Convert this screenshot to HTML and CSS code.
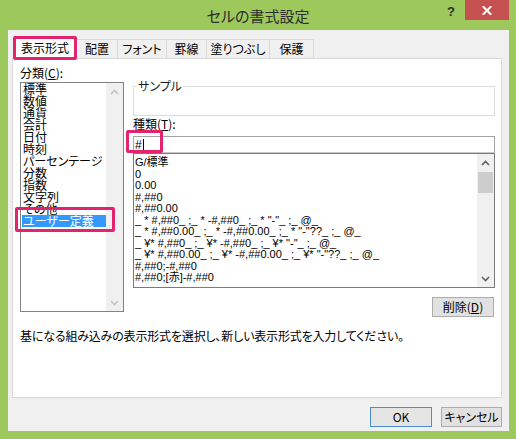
FILE: index.html
```html
<!DOCTYPE html>
<html lang="ja">
<head>
<meta charset="utf-8">
<title>セルの書式設定</title>
<link rel="stylesheet" href="styles.css">
</head>
<body>
<div class="window">
  <div class="titlebar">
    <div></div>
    <div class="title">セルの書式設定</div>
    <div class="controls">
      <span class="help">?</span>
      <span class="close"><svg width="10" height="9" viewBox="0 0 10 9"><path d="M1.5 1 L8.5 8 M8.5 1 L1.5 8" stroke="#fff" stroke-width="2" stroke-linecap="square"/></svg></span>
    </div>
  </div>
  <div class="client">
    <div class="tabs">
      <div class="tab selected t1">表示形式</div>
      <div class="tab t2">配置</div>
      <div class="tab t3">フォント</div>
      <div class="tab t4">罫線</div>
      <div class="tab t5">塗りつぶし</div>
      <div class="tab t6">保護</div>
    </div>
    <div class="panel">
      <div class="leftcol">
        <div class="label">分類(<u>C</u>):</div>
        <div class="catlist">
          <div class="items">
            <div class="item">標準</div>
            <div class="item">数値</div>
            <div class="item">通貨</div>
            <div class="item">会計</div>
            <div class="item">日付</div>
            <div class="item">時刻</div>
            <div class="item">パーセンテージ</div>
            <div class="item">分数</div>
            <div class="item">指数</div>
            <div class="item">文字列</div>
            <div class="item">その他</div>
            <div class="item sel">ユーザー定義</div>
          </div>
          <div class="vscroll disabled">
            <div class="arrow"><svg width="9" height="6" viewBox="0 0 9 6"><polyline points="1,5 4.5,1.5 8,5" fill="none" stroke="#c4c4c4" stroke-width="1.6"/></svg></div>
            <div class="track"></div>
            <div class="arrow"><svg width="9" height="6" viewBox="0 0 9 6"><polyline points="1,1 4.5,4.5 8,1" fill="none" stroke="#c4c4c4" stroke-width="1.6"/></svg></div>
          </div>
        </div>
      </div>
      <div class="rightcol">
        <fieldset class="sample">
          <legend>サンプル</legend>
          <div class="sample-body"></div>
        </fieldset>
        <div class="label2">種類(<u>T</u>):</div>
        <div class="input"><span>#</span><span class="caret"></span></div>
        <div class="fmtlist">
          <div class="fitems">
            <div class="fitem">G/標準</div>
            <div class="fitem">0</div>
            <div class="fitem">0.00</div>
            <div class="fitem">#,##0</div>
            <div class="fitem">#,##0.00</div>
            <div class="fitem">_ * #,##0_ ;_ * -#,##0_ ;_ * "-"_ ;_ @_</div>
            <div class="fitem">_ * #,##0.00_ ;_ * -#,##0.00_ ;_ * "-"??_ ;_ @_</div>
            <div class="fitem">_ ¥* #,##0_ ;_ ¥* -#,##0_ ;_ ¥* "-"_ ;_ @_</div>
            <div class="fitem">_ ¥* #,##0.00_ ;_ ¥* -#,##0.00_ ;_ ¥* "-"??_ ;_ @_</div>
            <div class="fitem">#,##0;-#,##0</div>
            <div class="fitem">#,##0;[赤]-#,##0</div>
          </div>
          <div class="vscroll">
            <div class="arrow"><svg width="9" height="6" viewBox="0 0 9 6"><polyline points="1,5 4.5,1.5 8,5" fill="none" stroke="#606060" stroke-width="1.6"/></svg></div>
            <div class="thumb"></div>
            <div class="track"></div>
            <div class="arrow"><svg width="9" height="6" viewBox="0 0 9 6"><polyline points="1,1 4.5,4.5 8,1" fill="none" stroke="#606060" stroke-width="1.6"/></svg></div>
          </div>
        </div>
        <div class="delrow"><button class="btn del">削除(<u>D</u>)</button></div>
      </div>
      <div class="desc">基になる組み込みの表示形式を選択し、新しい表示形式を入力してください。</div>
    </div>
    <div class="buttons">
      <button class="btn ok">OK</button>
      <button class="btn cancel">キャンセル</button>
    </div>
  </div>
  <div class="mark mark-tab"></div>
  <div class="mark mark-input"></div>
  <div class="mark mark-list"></div>
</div>
</body>
</html>
```

FILE: styles.css
```css
* { box-sizing: border-box; }
html, body { margin: 0; padding: 0; }
body {
  background: #9dc85c;
  font-family: "Noto Sans CJK JP", "Liberation Sans", sans-serif;
  font-feature-settings: "palt";
  font-size: 12px;
  color: #000;
}
.window {
  position: relative;
  width: 516px;
  height: 439px;
  background: #9dc85c;
  display: flex;
  flex-direction: column;
}
.titlebar {
  height: 30px;
  display: grid;
  grid-template-columns: 1fr auto 1fr;
}
.title {
  font-size: 15px;
  line-height: 30px;
  color: #2e2e2e;
  padding-top: 1px;
}
.controls {
  display: flex;
  justify-content: flex-end;
  align-items: flex-start;
  padding-right: 7px;
}
.help {
  width: 14px;
  margin-top: 4px;
  margin-right: 7px;
  font-family: "Liberation Sans", sans-serif;
  font-weight: bold;
  font-size: 13px;
  line-height: 16px;
  text-align: center;
  color: #303030;
}
.close {
  width: 44px;
  height: 20px;
  background: #c75050;
  display: flex;
  align-items: center;
  justify-content: center;
}
.client {
  flex: 1;
  margin: 0 7px 8px 8px;
  background: #f0f0f0;
  padding: 7px 7px 4px 4px;
  display: flex;
  flex-direction: column;
}
.tabs {
  height: 21px;
  display: flex;
  align-items: flex-end;
  padding-left: 1px;
}
.tab {
  height: 19px;
  border: 1px solid #d9d9d9;
  border-bottom: none;
  background: #f0f0f0;
  margin-left: -1px;
  text-align: center;
  line-height: 18px;
  white-space: nowrap;
}
.tab.selected {
  height: 22px;
  margin-bottom: -1px;
  background: #fff;
  position: relative;
  z-index: 1;
  line-height: 20px;
  margin-left: 0;
}
.t1 { width: 64px; }
.t2 { width: 42px; margin-left: -1px; }
.t3 { width: 50px; }
.t4 { width: 41px; }
.t5 { width: 64px; }
.t6 { width: 45px; }
.panel {
  height: 340px;
  background: #fff;
  border: 1px solid #d9d9d9;
  display: grid;
  grid-template-columns: 104px 362px;
  grid-template-rows: 252px auto;
  column-gap: 9px;
  padding: 6px 0 0 7px;
}
.leftcol { display: flex; flex-direction: column; }
.label { line-height: 16px; height: 16px; margin-bottom: 1px; }
.catlist {
  height: 230px;
  border: 1px solid #838383;
  display: flex;
}
.items { flex: 1; padding-left: 1px; }
.item {
  height: 12px;
  line-height: 12px;
  padding-left: 1px;
  white-space: nowrap;
  overflow: visible;
}
.item.sel { background: #3399ff; color: #fff; }
.vscroll {
  width: 17px;
  background: #f0f0f0;
  display: flex;
  flex-direction: column;
}
.vscroll .arrow {
  height: 17px;
  display: flex;
  align-items: center;
  justify-content: center;
}
.vscroll .track { flex: 1; }
.vscroll .thumb {
  height: 21px;
  margin: 1px 1px 0 1px;
  background: #cdcdcd;
}
.rightcol { display: flex; flex-direction: column; }
.sample {
  margin: 14px 0 0 0;
  padding: 0;
  border: 1px solid #dcdcdc;
  min-width: 0;
}
.sample legend {
  padding: 0 1px;
  margin-left: 3px;
  line-height: 14px;
  color: #1a1a1a;
}
.sample-body { height: 22px; }
.label2 { line-height: 14px; height: 14px; margin-top: 1px; }
.input {
  margin-top: 5px;
  height: 17px;
  border: 1px solid #a3a3a3;
  border-bottom-color: #c9c9c9;
  display: flex;
  align-items: center;
  padding-left: 1px;
  font-family: "Liberation Sans", sans-serif;
  font-size: 12px;
}
.caret {
  width: 1px;
  height: 12px;
  background: #000;
  margin-left: 1px;
}
.fmtlist {
  height: 135px;
  border: 1px solid #7a7a7a;
  display: flex;
}
.fitems {
  flex: 1;
  padding: 3px 0 0 1px;
  font-family: "Liberation Sans", "Noto Sans CJK JP", sans-serif;
  font-size: 11px;
}
.fitem {
  height: 11.5px;
  line-height: 11.5px;
  white-space: pre;
}
.delrow {
  margin-top: 9px;
  display: flex;
  justify-content: flex-end;
  padding-right: 1px;
}
.btn {
  font-family: "Noto Sans CJK JP", "Liberation Sans", sans-serif;
  font-feature-settings: "palt";
  font-size: 12px;
  height: 20px;
  padding: 0;
  line-height: 18px;
  background: #e1e1e1;
  border: 1px solid #adadad;
  color: #000;
}
.del { width: 62px; }
.desc {
  grid-column: 1 / 3;
  margin-top: 12px;
  line-height: 14px;
  height: 14px;
  white-space: nowrap;
  letter-spacing: -0.17px;
}
.buttons {
  margin-top: 9px;
  display: flex;
  justify-content: flex-end;
  gap: 9px;
}
.ok { width: 62px; border-color: #4a8fd6; background: #e5e5e5; }
.cancel { width: 61px; }
.mark {
  position: absolute;
  border: 3px solid #e4236e;
  border-radius: 2px;
  z-index: 5;
}
.mark-tab { left: 13px; top: 36px; width: 64px; height: 24px; }
.mark-input { left: 126px; top: 130px; width: 37px; height: 23px; }
.mark-list { left: 15px; top: 207px; width: 100px; height: 25px; }
```
